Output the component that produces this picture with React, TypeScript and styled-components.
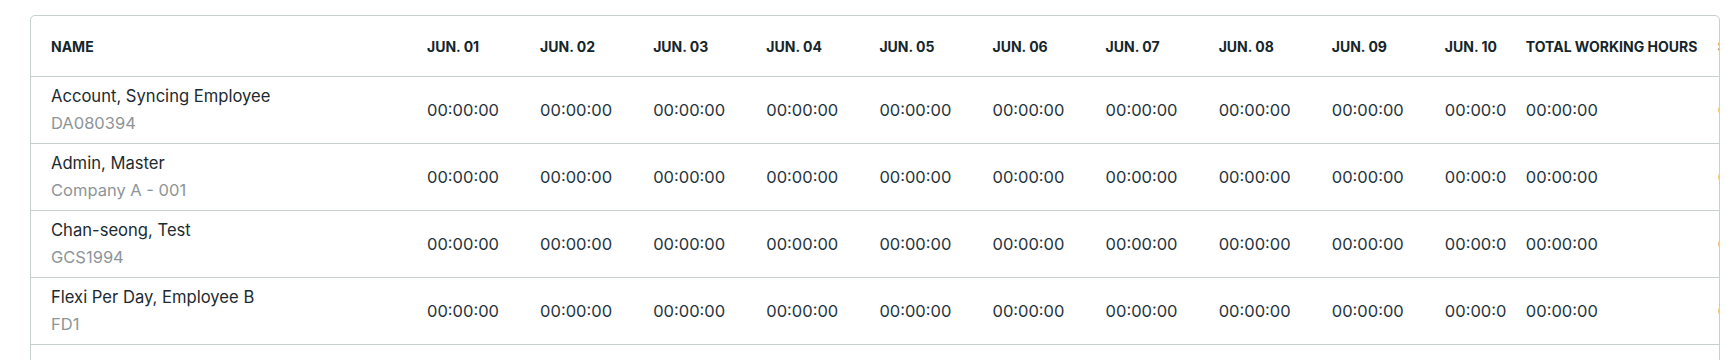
import React from 'react';
import styled, { createGlobalStyle } from 'styled-components';

const GlobalStyle = createGlobalStyle`
  html, body {
    margin: 0;
    background: #ffffff;
  }
  body {
    padding: 15px 15px 0 30px;
    font-family: Inter, "Noto Sans", Roboto, sans-serif;
    color: #1d2b30;
  }
`;

const Card = styled.div`
  border: 1px solid #c6d0cf;
  border-radius: 5px;
  overflow: hidden;
  height: 400px;
  background: #fff;
`;

const Table = styled.table`
  border-collapse: collapse;
  table-layout: fixed;
  width: 1850px;
`;

const HeadCell = styled.th`
  height: 60px;
  padding: 0 0 0 20px;
  text-align: left;
  font-size: 14px;
  font-weight: 700;
  color: #15262b;
  white-space: nowrap;
  overflow: hidden;
  border-bottom: 1px solid #c6d0cf;
`;

const Row = styled.tr`
  border-bottom: 1px solid #c6d0cf;
`;

const Cell = styled.td`
  height: 66px;
  padding: 0 0 0 20px;
  font-size: 16.5px;
  color: #1f3440;
  white-space: nowrap;
  overflow: hidden;
  vertical-align: middle;
`;

const Name = styled.div`
  font-size: 16.6px;
  line-height: 27px;
  color: #1d2b30;
`;

const Code = styled.div`
  font-size: 16.5px;
  line-height: 27px;
  color: #8d9598;
`;

const days = ['01', '02', '03', '04', '05', '06', '07', '08', '09', '10'];

const employees = [
  { name: 'Account, Syncing Employee', code: 'DA080394' },
  { name: 'Admin, Master', code: 'Company A - 001' },
  { name: 'Chan-seong, Test', code: 'GCS1994' },
  { name: 'Flexi Per Day, Employee B', code: 'FD1' },
];

const colWidth = (d: string) => (d === '10' ? 81 : 113.1);

export default function App() {
  return (
    <>
      <GlobalStyle />
      <Card>
        <Table>
          <colgroup>
            <col style={{ width: 376 }} />
            {days.map((d) => (
              <col key={d} style={{ width: colWidth(d) }} />
            ))}
            <col style={{ width: 192 }} />
            <col style={{ width: 200 }} />
          </colgroup>
          <thead>
            <tr>
              <HeadCell>NAME</HeadCell>
              {days.map((d) => (
                <HeadCell key={d}>JUN. {d}</HeadCell>
              ))}
              <HeadCell>TOTAL WORKING HOURS</HeadCell>
              <HeadCell>SCHEDULED HOURS</HeadCell>
            </tr>
          </thead>
          <tbody>
            {employees.map((e) => (
              <Row key={e.code}>
                <Cell>
                  <Name>{e.name}</Name>
                  <Code>{e.code}</Code>
                </Cell>
                {days.map((d) => (
                  <Cell key={d}>00:00:00</Cell>
                ))}
                <Cell>00:00:00</Cell>
                <Cell>00:00:00</Cell>
              </Row>
            ))}
          </tbody>
        </Table>
      </Card>
    </>
  );
}
